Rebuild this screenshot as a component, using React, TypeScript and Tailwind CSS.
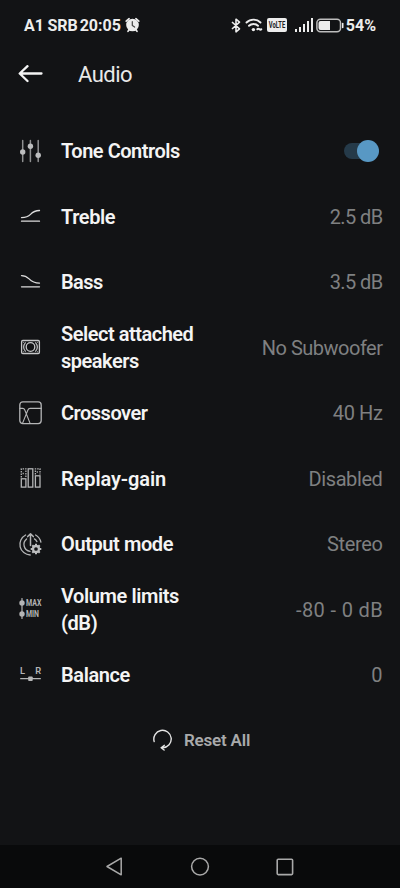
import React from 'react';

interface Setting {
    id: string;
    label: React.ReactNode;
    labelClass?: string;
    value?: string;
    valueClass?: string;
    icon: React.ReactNode;
}

const IconBox: React.FC<{ children: React.ReactNode }> = ({ children }) => (
    <svg width="24" height="24" viewBox="0 0 24 24" fill="none" stroke="#b4b5b6" strokeWidth="1.3" strokeLinecap="round" strokeLinejoin="round" className="shrink-0 overflow-visible">
        {children}
    </svg>
);

const ToneIcon = () => (
    <IconBox>
        <path d="M4.7 1.6v21M12.4 1.6v21M20.2 1.6v21" strokeWidth="1.5" stroke="#8f9091" />
        <g fill="#bcbdbe" stroke="none">
            <circle cx="4.7" cy="13" r="2.7" />
            <circle cx="12.4" cy="7.3" r="2.7" />
            <circle cx="20.2" cy="16.2" r="2.7" />
        </g>
    </IconBox>
);

const TrebleIcon = () => (
    <IconBox>
        <path d="M3.5 13.6c4.6 0 6.6-.6 9-3.2 2.6-2.8 4.5-3.9 9-3.9M3.5 17.2h18" stroke="#dcdcdc" />
    </IconBox>
);

const BassIcon = () => (
    <IconBox>
        <path d="M3.5 5.6c3.6 0 5.2 1 7.6 3.3 2.8 2.9 5 4.2 10.4 4.2M3.5 16.8h18" stroke="#dcdcdc" />
    </IconBox>
);

const SpeakerIcon = () => (
    <IconBox>
        <rect x="3.6" y="5.5" width="17.8" height="13" rx="1.2" stroke="#c6c7c8" />
        <circle cx="12.5" cy="12" r="4.3" stroke="#c6c7c8" />
        <path d="M7.3 7.8c-2 2.5-2 5.9 0 8.4M17.7 7.8c2 2.5 2 5.900 0 8.400" />
        <path d="M5.400 7.300v.1M5.400 16.700v.1M19.600 7.300v.1M19.600 16.700v.1" strokeWidth="1" />
    </IconBox>
);

const CrossoverIcon = () => (
    <IconBox>
        <rect x="1.8" y="0.9" width="21.4" height="21.7" rx="3" />
        <path d="M1.8 7.4h2.9c1.3 0 1.7.6 2.2 1.8l5.2 13.2M4.5 22.4l5.3-13.2c.5-1.2 1-1.8 2.3-1.8h11.1" strokeWidth="1.1" />
    </IconBox>
);

const ReplayGainIcon = () => (
    <IconBox>
        <g strokeLinecap="butt" strokeLinejoin="miter">
            <rect x="3.300" y="12.800" width="4.600" height="8.300" />
            <rect x="10.200" y="2.800" width="4.600" height="18.300" />
            <rect x="17.400" y="9.800" width="4.600" height="11.300" />
            <path d="M3.300 11.500v-8.700h4.600v8.700" strokeDasharray="1.500 1" />
            <path d="M17.400 8.500v-5.700h4.600v5.700" strokeDasharray="1.500 1" />
            <path d="M4.600 7.500h2M18.700 6h2" strokeDasharray="1.200 0.800" />
        </g>
    </IconBox>
);

const OutputIcon = () => (
    <IconBox>
        <path d="M12.5 13.6V2M9.7 4.600l2.800-2.900 2.800 2.900" strokeWidth="1.500" />
        <path d="M7.600 3a10.600 10.600 0 0 0 4.600 20M17.600 3a10.600 10.600 0 0 1 5.300 7.200" />
        <path d="M8.600 6.900a7 7 0 0 0 3.400 12.400M16.400 6.900a7 7 0 0 1 2.500 2.700" />
        <circle cx="18" cy="17" r="3" strokeWidth="2.300" stroke="#bdbebf" />
        <path d="M18 13.400v-1.700M18 20.600v1.700M14.400 17h-1.700M21.600 17h1.700M15.500 14.500l-1.200-1.200M20.500 19.500l1.200 1.200M20.500 14.500l1.200-1.200M15.500 19.500l-1.200 1.200" strokeWidth="2" strokeLinecap="butt" stroke="#bdbebf" />
    </IconBox>
);

const VolumeIcon = () => (
    <IconBox>
        <path d="M4 1.5v20" strokeWidth="1.2" />
        <g fill="#b4b5b6" stroke="none">
            <circle cx="4" cy="6" r="2.7" />
            <circle cx="4" cy="17" r="2.7" />
            <text x="8" y="8.9" fontSize="8.300" fontWeight="700" textLength="15.400" lengthAdjust="spacingAndGlyphs" className="font-['Roboto',sans-serif]">MAX</text>
            <text x="8" y="19.900" fontSize="8.300" fontWeight="700" textLength="13" lengthAdjust="spacingAndGlyphs" className="font-['Roboto',sans-serif]">MIN</text>
        </g>
    </IconBox>
);

const BalanceIcon = () => (
    <IconBox>
        <path d="M2.7 15.7h19.600" />
        <g fill="#b4b5b6" stroke="none">
            <rect x="10.200" y="13.500" width="4.500" height="4.500" rx="0.800" />
            <text x="1.900" y="10.900" fontSize="9.300" fontWeight="600" className="font-['Roboto',sans-serif]">L</text>
            <text x="17.200" y="10.900" fontSize="9.300" fontWeight="600" className="font-['Roboto',sans-serif]">R</text>
        </g>
    </IconBox>
);

const SETTINGS: Setting[] = [
    { id: 'tone', label: 'Tone Controls', labelClass: 'tracking-[-0.47px]', icon: <ToneIcon /> },
    { id: 'treble', label: 'Treble', labelClass: 'tracking-[-0.4px]', value: '2.5 dB', valueClass: 'tracking-[-0.6px]', icon: <TrebleIcon /> },
    { id: 'bass', label: 'Bass', labelClass: 'tracking-[-0.6px]', value: '3.5 dB', valueClass: 'tracking-[-0.6px]', icon: <BassIcon /> },
    { id: 'speakers', label: <>Select attached<br />speakers</>, labelClass: 'tracking-[-0.48px]', value: 'No Subwoofer', valueClass: 'tracking-[-0.5px]', icon: <SpeakerIcon /> },
    { id: 'crossover', label: 'Crossover', labelClass: 'tracking-[-0.5px]', value: '40 Hz', valueClass: 'tracking-[-0.4px]', icon: <CrossoverIcon /> },
    { id: 'replay', label: 'Replay-gain', labelClass: 'tracking-[-0.1px]', value: 'Disabled', valueClass: 'tracking-[-0.4px]', icon: <ReplayGainIcon /> },
    { id: 'output', label: 'Output mode', labelClass: 'tracking-[-0.4px]', value: 'Stereo', valueClass: 'tracking-[-0.35px]', icon: <OutputIcon /> },
    { id: 'volume', label: <>Volume limits<br />(dB)</>, labelClass: 'tracking-[-0.42px]', value: '-80 - 0 dB', valueClass: 'tracking-[0.35px] -mr-[0.5px]', icon: <VolumeIcon /> },
    { id: 'balance', label: 'Balance', labelClass: 'tracking-[-0.4px]', value: '0', icon: <BalanceIcon /> },
];

const StatusBar = () => (
    <div className="flex h-[50px] items-center pl-6 pr-6 text-[16px] font-bold text-[#ededed]">
        <span className="pt-[2px] tracking-[-0.1px]">A1 SRB</span>
        <span className="ml-[2px] pt-[2px]">20:05</span>
        <svg width="15" height="16" viewBox="0 0 15 16" className="ml-[4px]" fill="none" strokeLinecap="round">
            <path d="M1.2 4.2l2.900-2.500M13.800 4.200l-2.900-2.500M3 14.300l1.200-1.500M12 14.300l-1.200-1.500" stroke="#ededed" strokeWidth="1.700" />
            <circle cx="7.500" cy="8" r="6.300" fill="#ededed" />
            <path d="M7.300 4.700v3.700l2.300 1.700" stroke="#444" strokeWidth="1.200" />
        </svg>
        <div className="ml-auto flex items-center">
            <svg width="10" height="15" viewBox="0 0 10 15" fill="none" stroke="#ededed" strokeWidth="1.600" strokeLinejoin="round">
                <path d="M1 4l7.500 6.800L5 13.800V1.200l3.500 3L1 11" />
            </svg>
            <svg width="18" height="16" viewBox="0 0 18 16" className="ml-[4px]" fill="none" stroke="#ededed" strokeWidth="1.900" strokeLinecap="round">
                <path d="M1.500 5.500a10 10 0 0 1 14 0M4 8.800a6.500 6.500 0 0 1 9 0" />
                <circle cx="8.400" cy="12.600" r="1.700" fill="#ededed" stroke="none" />
                <path d="M12.300 12.200c1.500-1.600 2.500 1.600 4 0" strokeWidth="2" />
            </svg>
            <svg width="20" height="14" viewBox="0 0 20 14" className="ml-[4px] overflow-visible">
                <rect width="20" height="14" rx="2" fill="#ededed" />
                <text x="1.800" y="10.400" fontSize="9.500" fontWeight="700" textLength="16.400" lengthAdjust="spacingAndGlyphs" fill="#1b1c1d" className="font-['Roboto',sans-serif]">VoLTE</text>
            </svg>
            <div className="ml-[8px] flex h-[14px] items-end gap-[2px]">
                <i className="h-[3px] w-[2px] bg-[#ededed]" />
                <i className="h-[5px] w-[2px] bg-[#ededed]" />
                <i className="h-[8px] w-[2px] bg-[#ededed]" />
                <i className="h-[11px] w-[2px] bg-[#ededed]" />
                <i className="h-[14px] w-[2px] bg-[#ededed]" />
            </div>
            <svg width="28" height="15" viewBox="0 0 28 15" className="ml-[3px]">
                <rect x="0.900" y="1.200" width="23.600" height="12.600" rx="3.500" fill="none" stroke="#bdbdbd" strokeWidth="1.500" />
                <path d="M4.500 3h9.500v9h-9.500a2 2 0 0 1-2-2v-5a2 2 0 0 1 2-2z" fill="#ededed" />
                <path d="M26.700 5.500v4" stroke="#ededed" strokeWidth="1.600" strokeLinecap="round" />
            </svg>
            <span className="ml-[2px] pt-[2px]">54%</span>
        </div>
    </div>
);

const Toggle = () => (
    <button role="switch" aria-checked="true" aria-label="Tone Controls" className="relative mr-[3.5px] h-[22px] w-[35px]">
        <span className="absolute left-0 top-[3px] h-4 w-8 rounded-full bg-[#253a49]" />
        <span className="absolute right-0 top-0 size-[22px] rounded-full bg-[#5898c4]" />
    </button>
);

const SettingRow: React.FC<{ item: Setting }> = ({ item }) => (
    <div className="flex h-[65.5px] items-center pl-[18px] pr-[17.5px]">
        {item.icon}
        <div className="ml-[19px] pt-px text-[20px] leading-[26.5px] font-semibold text-[#f4f4f4]">
            <span className={item.labelClass}>{item.label}</span>
        </div>
        <div className="ml-auto flex pt-px text-[20px] text-[#7f8081]">
            {item.value ? <span className={item.valueClass}>{item.value}</span> : <Toggle />}
        </div>
    </div>
);

export default function App() {
    return (
        <div className="flex h-[888px] w-[400px] flex-col overflow-hidden bg-[#121315] font-['Roboto',sans-serif]">
            <StatusBar />
            <header className="flex h-[48px] items-center pl-[18px]">
                <svg width="26" height="18" viewBox="0 0 26 18" fill="none" stroke="#f4f4f4" strokeWidth="2.3" strokeLinecap="round" strokeLinejoin="round">
                    <path d="M23.5 8.5H2M9.5 1.2L1.7 8.5l7.8 7.5" />
                </svg>
                <h1 className="ml-[34px] text-[22px] tracking-[-0.5px] text-[#e8e8e8]">Audio</h1>
            </header>
            <main className="pt-[20px]">
                {SETTINGS.map(item => <SettingRow key={item.id} item={item} />)}
                <button className="flex h-[65.5px] w-full items-center pl-[152px]">
                    <svg width="22" height="22" viewBox="0 0 22 22" fill="none" stroke="#e4e4e4" strokeWidth="1.4" strokeLinecap="round" strokeLinejoin="round">
                        <path d="M2.2 12.5a8.7 8.700 0 1 1 8.500 6.200M12.400 16.300l-3.300 2.400 3 2.300" />
                    </svg>
                    <span className="ml-[10px] pt-px text-[17px] font-semibold tracking-[-0.2px] text-[#a9aaab]">Reset All</span>
                </button>
            </main>
            <nav className="mt-auto flex h-[43px] items-center justify-between bg-[#090a0b] pl-[105px] pr-[106px]">
                <svg width="18" height="20" viewBox="0 0 18 20" fill="none" stroke="#a9a9a9" strokeWidth="1.5" strokeLinejoin="round">
                    <path d="M16.2 1.200v16.600L2 9.500z" />
                </svg>
                <svg width="20" height="20" viewBox="0 0 20 20" fill="none" stroke="#a9a9a9" strokeWidth="1.5">
                    <circle cx="10" cy="9.600" r="8.400" />
                </svg>
                <svg width="18" height="18" viewBox="0 0 18 18" fill="none" stroke="#a9a9a9" strokeWidth="1.600">
                    <rect x="1.200" y="1.200" width="15.400" height="15.400" rx="1" />
                </svg>
            </nav>
        </div>
    );
}
